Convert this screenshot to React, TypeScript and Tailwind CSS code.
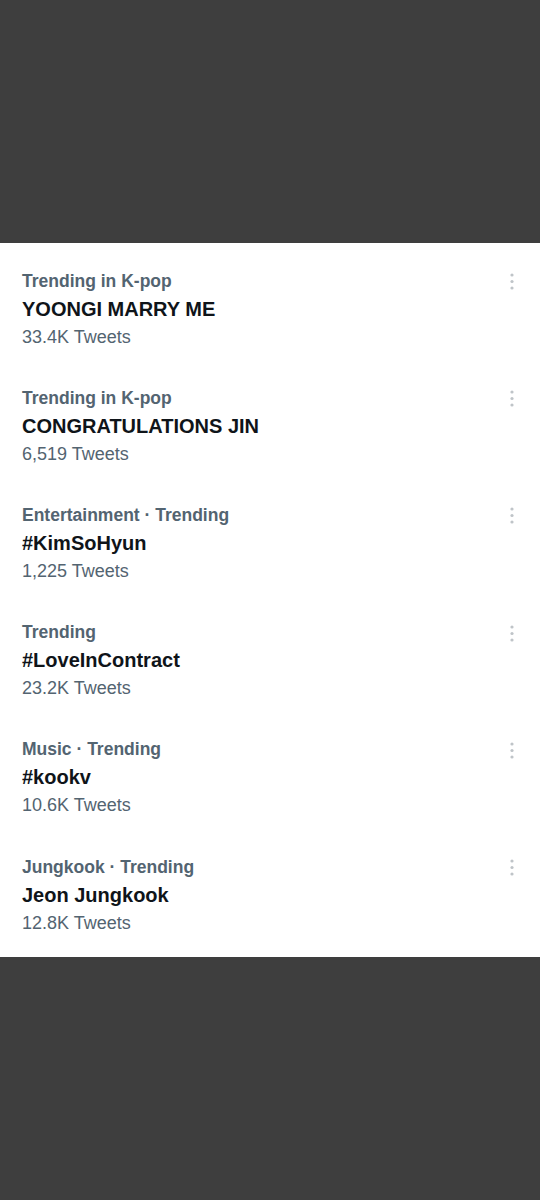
import React from 'react';

interface Trend {
  category: string;
  title: string;
  count: string;
}

const trends: Trend[] = [
  { category: 'Trending in K-pop', title: 'YOONGI MARRY ME', count: '33.4K Tweets' },
  { category: 'Trending in K-pop', title: 'CONGRATULATIONS JIN', count: '6,519 Tweets' },
  { category: 'Entertainment · Trending', title: '#KimSoHyun', count: '1,225 Tweets' },
  { category: 'Trending', title: '#LoveInContract', count: '23.2K Tweets' },
  { category: 'Music · Trending', title: '#kookv', count: '10.6K Tweets' },
  { category: 'Jungkook · Trending', title: 'Jeon Jungkook', count: '12.8K Tweets' },
];

const MoreDots = () => (
  <svg width="6" height="20" viewBox="0 0 6 20" className="text-[#bfc4c8]">
    <circle cx="3" cy="4" r="1.6" fill="currentColor" />
    <circle cx="3" cy="10.5" r="1.6" fill="currentColor" />
    <circle cx="3" cy="17" r="1.6" fill="currentColor" />
  </svg>
);

export default function App() {
  return (
    <div className="w-[540px] h-[1200px] flex flex-col bg-[#3e3e3e] font-['Liberation_Sans',Arial,sans-serif]">
      <div className="h-[243px] shrink-0"></div>

      {/* Trends list */}
      <div className="h-[714px] shrink-0 bg-white pt-[7px] pb-[3px]">
        {trends.map((t, i) => (
          <div key={i} className="h-[117.2px] flex items-center justify-between pl-[22px] pr-[25px]">
            <div className="flex flex-col">
              <span className="text-[17.5px] leading-[28px] font-bold text-[#536471]">{t.category}</span>
              <span className="text-[20px] leading-[28px] font-bold text-[#0f1419]">{t.title}</span>
              <span className="text-[18px] leading-[28px] text-[#536471]">{t.count}</span>
            </div>
            <div className="self-start mt-[21px]">
              <MoreDots />
            </div>
          </div>
        ))}
      </div>

      <div className="flex-1"></div>
    </div>
  );
}
